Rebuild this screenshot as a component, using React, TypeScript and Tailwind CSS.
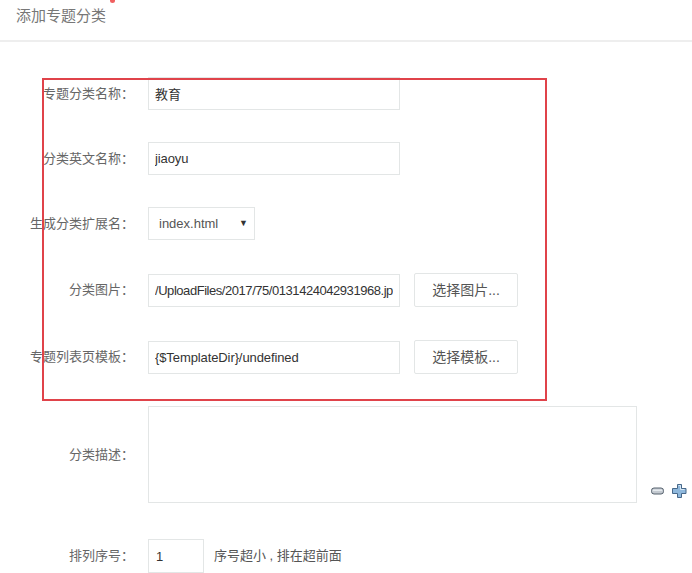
const FONT = { fontFamily: '"Liberation Sans", "Noto Sans CJK SC", sans-serif' };

function Label({ children }: { children: string }) {
  return (
    <div className="w-[134px] shrink-0 text-right text-[13px] text-[#666] whitespace-nowrap">
      {children}
    </div>
  );
}

function TextBox({ value, tight }: { value: string; tight?: boolean }) {
  return (
    <input
      readOnly
      value={value}
      className={`w-[252px] h-[33px] border border-[#e3e6e6] bg-white px-[6px] text-[13px] text-[#333] outline-none ${tight ? "tracking-[-0.45px]" : "tracking-[-0.1px]"}`}
      style={FONT}
    />
  );
}

function PickButton({ label }: { label: string }) {
  return (
    <button className="ml-[14px] w-[104px] h-[34px] border border-[#e3e6e6] bg-white text-[14px] text-[#555] rounded-[2px]">
      {label}
    </button>
  );
}

function MinusIcon() {
  return (
    <svg width="13" height="8" viewBox="0 0 13 8">
      <rect x="0.5" y="1" width="12" height="6" rx="2.5" fill="#c3c9d0" stroke="#56626e" />
      <rect x="2" y="2.6" width="9" height="1.2" fill="#eef2f5" />
    </svg>
  );
}

function PlusIcon() {
  return (
    <svg width="15" height="14" viewBox="0 0 15 14">
      <path
        d="M5.5 0.5h4v4h4.5v5h-4.5v4h-4v-4h-5v-5h5z"
        fill="#8fb8dc"
        stroke="#47688a"
        strokeLinejoin="round"
      />
      <path d="M6.5 1.5h2v4h4" fill="none" stroke="#d6e7f5" />
    </svg>
  );
}

export default function App() {
  return (
    <div className="relative w-[692px] h-[573px] overflow-hidden bg-white" style={FONT}>
      {/* header */}
      <div className="h-[42px] border-b-[2px] border-[#eeeeee] pl-[16px] pt-[5px] text-[15px] text-[#777]">
        添加专题分类
      </div>
      <div className="absolute left-[110px] top-0 w-[5px] h-[3px] bg-[#f06060] rounded-b-full" />

      <div className="pt-[35px]">
        <div className="flex items-center">
          <Label>专题分类名称：</Label>
          <div className="ml-[14px]">
            <TextBox value="教育" />
          </div>
        </div>

        <div className="flex items-center mt-[32px]">
          <Label>分类英文名称：</Label>
          <div className="ml-[14px]">
            <TextBox value="jiaoyu" />
          </div>
        </div>

        <div className="flex items-center mt-[32px]">
          <Label>生成分类扩展名：</Label>
          <div className="ml-[14px] w-[107px] h-[33px] border border-[#e3e6e6] flex items-center justify-between pl-[10px] pr-[6px] text-[13px] text-[#555]">
            <span>index.html</span>
            <span className="text-[9px] text-[#333]">▼</span>
          </div>
        </div>

        <div className="flex items-center mt-[33px]">
          <Label>分类图片：</Label>
          <div className="ml-[14px] flex items-center">
            <TextBox value="/UploadFiles/2017/75/0131424042931968.jpg" tight />
            <PickButton label="选择图片..." />
          </div>
        </div>

        <div className="flex items-center mt-[33px]">
          <Label>专题列表页模板：</Label>
          <div className="ml-[14px] flex items-center">
            <TextBox value="{$TemplateDir}/undefined" />
            <PickButton label="选择模板..." />
          </div>
        </div>

        <div className="flex items-center mt-[32px]">
          <Label>分类描述：</Label>
          <div className="ml-[14px] flex items-end">
            <div className="w-[489px] h-[97px] border border-[#e3e6e6]" />
            <div className="flex items-center gap-[8px] ml-[14px] mb-[5px]">
              <MinusIcon />
              <PlusIcon />
            </div>
          </div>
        </div>

        <div className="flex items-center mt-[36px]">
          <Label>排列序号：</Label>
          <div className="ml-[14px] flex items-center">
            <input
              readOnly
              value="1"
              className="w-[56px] h-[34px] border border-[#e3e6e6] px-[7px] text-[13px] text-[#333] outline-none"
              style={FONT}
            />
            <span className="ml-[10px] text-[13px] text-[#555]">序号超小 , 排在超前面</span>
          </div>
        </div>
      </div>

      {/* annotation box */}
      <div className="absolute left-[42px] top-[78px] w-[505px] h-[323px] border-2 border-[#e0434a] pointer-events-none" />
    </div>
  );
}
